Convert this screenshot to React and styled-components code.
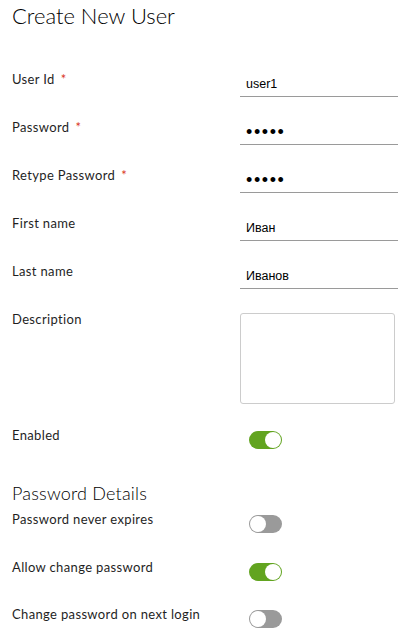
import React from "react";
import styled, { createGlobalStyle } from "styled-components";

const GlobalStyle = createGlobalStyle`
  html, body {
    margin: 0;
    padding: 0;
    background: #fff;
  }
  body {
    font-family: Lato, "Noto Sans", sans-serif;
    color: #333;
  }
`;

const StyledPage = styled.div`
  padding: 0 12px;
  width: 408px;
  box-sizing: border-box;
`;

const StyledTitle = styled.h2`
  margin: 2px 0 0;
  font-size: 22px;
  line-height: 28px;
  font-weight: 300;
  color: #000;
`;

const StyledSectionTitle = styled.h3`
  margin: 33px 0 0;
  font-size: 18px;
  line-height: 22px;
  font-weight: 300;
  letter-spacing: 0.2px;
  color: #000;
`;

const StyledForm = styled.div`
  display: flex;
  flex-direction: column;
  gap: ${(p) => p.$gap}px;
  margin-top: ${(p) => p.$top}px;
`;

const StyledRow = styled.div`
  display: grid;
  grid-template-columns: 228px 1fr;
  align-items: start;
`;

const StyledLabel = styled.label`
  font-size: 13px;
  line-height: 14px;
  font-weight: 400;
  letter-spacing: 0.35px;
  color: #1f1f1f;
`;

const StyledRequired = styled.span`
  margin-left: 6px;
  color: #d9361c;
  font-size: 13px;
`;

const StyledInput = styled.input`
  box-sizing: border-box;
  width: 158px;
  height: 25px;
  margin: 0;
  padding: 0 6px;
  border: none;
  border-bottom: 1px solid #9a9a9a;
  outline: none;
  background: transparent;
  font-family: "Liberation Sans", Arial, sans-serif;
  font-size: ${(p) => (p.type === "password" ? "18px" : "12.5px")};
  letter-spacing: ${(p) => (p.type === "password" ? "1.6px" : "0")};
  color: #000;
`;

const StyledTextArea = styled.textarea`
  box-sizing: border-box;
  display: block;
  width: 155px;
  height: 91px;
  margin: 1px 0;
  padding: 4px 6px;
  border: 1px solid #ccc;
  border-radius: 3px;
  resize: none;
  outline: none;
  font-family: "Liberation Sans", Arial, sans-serif;
  font-size: 12px;
`;

const StyledToggle = styled.span`
  position: relative;
  display: block;
  width: 33px;
  height: 18px;
  margin: 3px 0 0 9px;
  border-radius: 9px;
  background: ${(p) => (p.$on ? "#62a420" : "#9a9a9a")};

  &::after {
    content: "";
    position: absolute;
    top: 1px;
    left: ${(p) => (p.$on ? "16px" : "1px")};
    width: 16px;
    height: 16px;
    border-radius: 50%;
    background: #fff;
  }
`;

const InputRow = ({ label, required, type = "text", value }) => (
  <StyledRow>
    <StyledLabel>
      {label}
      {required && <StyledRequired>*</StyledRequired>}
    </StyledLabel>
    <StyledInput type={type} defaultValue={value} />
  </StyledRow>
);

const ToggleRow = ({ label, on }) => (
  <StyledRow>
    <StyledLabel>{label}</StyledLabel>
    <StyledToggle $on={on} />
  </StyledRow>
);

const App = () => {
  return (
    <StyledPage>
      <GlobalStyle />
      <StyledTitle>Create New User</StyledTitle>
      <StyledForm $gap={23} $top={42}>
        <InputRow label="User Id" required value="user1" />
        <InputRow label="Password" required type="password" value="12345" />
        <InputRow label="Retype Password" required type="password" value="12345" />
        <InputRow label="First name" value="Иван" />
        <InputRow label="Last name" value="Иванов" />
        <StyledRow>
          <StyledLabel>Description</StyledLabel>
          <StyledTextArea />
        </StyledRow>
        <ToggleRow label="Enabled" on />
      </StyledForm>
      <StyledSectionTitle>Password Details</StyledSectionTitle>
      <StyledForm $gap={26.5} $top={8}>
        <ToggleRow label="Password never expires" />
        <ToggleRow label="Allow change password" on />
        <ToggleRow label="Change password on next login" />
      </StyledForm>
    </StyledPage>
  );
};

export default App;
